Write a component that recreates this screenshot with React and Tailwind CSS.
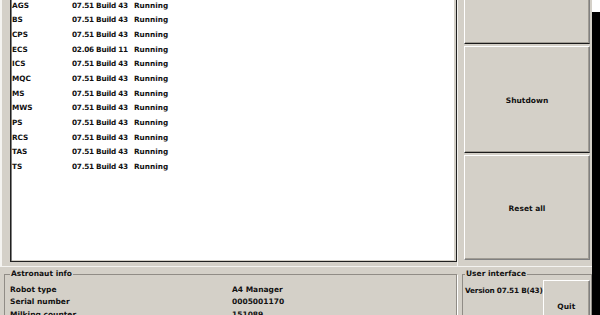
import React from "react";

const services = [
  ["AGS", "07.51 Build 43"],
  ["BS", "07.51 Build 43"],
  ["CPS", "07.51 Build 43"],
  ["ECS", "02.06 Build 11"],
  ["ICS", "07.51 Build 43"],
  ["MQC", "07.51 Build 43"],
  ["MS", "07.51 Build 43"],
  ["MWS", "07.51 Build 43"],
  ["PS", "07.51 Build 43"],
  ["RCS", "07.51 Build 43"],
  ["TAS", "07.51 Build 43"],
  ["TS", "07.51 Build 43"]
];

const robotInfo = [
  ["Robot type", "A4 Manager"],
  ["Serial number", "0005001170"],
  ["Milking counter", "151089"]
];

const PanelButton = ({ label, className }) => (
  <button
    className={`w-full flex items-center justify-center bg-[#d4d0c8] border-t border-l border-t-white border-l-white border-b border-r border-b-[#1a1a1a] border-r-[#808080] shadow-[inset_-1px_-1px_0_#a09c94] text-[7.5px] font-bold text-[#111] ${className}`}
  >
    {label}
  </button>
);

const App = () => {
  return (
    <div
      className="w-[600px] h-[315px] overflow-hidden flex bg-[#d4d0c8] text-[#111]"
      style={{ fontFamily: '"DejaVu Sans", sans-serif' }}
    >
      <div className="w-[592px] flex flex-col">
        {/* Top: service list + action buttons */}
        <div className="h-[266px] flex">
          <div className="w-[457px] h-full pl-[8px] border-l-2 border-l-[#f4f3f0]">
            <div className="h-[263px] bg-white border-l border-r border-b border-[#202020] shadow-[inset_1px_0_0_#808080,inset_-2px_-1px_0_#d4d0c8]">
              <div className="mt-[-1px] pl-[1px]">
                {services.map(([name, version]) => (
                  <div key={name} className="h-[14.65px] flex items-center text-[7.3px] font-bold whitespace-nowrap">
                    <span className="w-[60px]">{name}</span>
                    <span className="w-[62px] tracking-[-0.25px]">{version}</span>
                    <span>Running</span>
                  </div>
                ))}
              </div>
            </div>
          </div>
          <div className="w-[135px] h-full pl-[6px] pr-[2px] flex flex-col gap-[2px] border-l border-l-[#f4f3f0]">
            <PanelButton label="" className="h-[45px] mt-[-1px] border-t-0" />
            <PanelButton label="Shutdown" className="h-[107px] pt-[3px]" />
            <PanelButton label="Reset all" className="h-[105px] pt-[3px] border-b-[#808080]" />
          </div>
        </div>

        {/* Bottom: info group boxes */}
        <div className="h-[49px] flex border-t border-t-[#f4f3f0]">
          <fieldset className="w-[453px] ml-[4px] h-[60px] mt-[2px] border border-[#908c86] shadow-[1px_1px_0_#fff] pl-[5px]">
            <legend className="text-[7.5px] font-bold px-[1px] leading-[10px]">Astronaut info</legend>
            <div className="mt-[4px]">
              {robotInfo.map(([label, value]) => (
                <div key={label} className="h-[12.5px] flex items-center text-[7.5px] font-bold">
                  <span className="w-[222px]">{label}</span>
                  <span>{value}</span>
                </div>
              ))}
            </div>
          </fieldset>
          <fieldset className="w-[130px] ml-[5px] h-[60px] mt-[2px] border border-[#908c86] shadow-[1px_1px_0_#fff] pl-[2px] pr-[1px]">
            <legend className="text-[7.5px] font-bold px-[1px] leading-[10px]">User interface</legend>
            <div className="flex items-start">
              <span className="text-[7.3px] font-bold mt-[7px] whitespace-nowrap tracking-[-0.2px]">Version 07.51 B(43)</span>
              <PanelButton label="Quit" className="ml-auto w-[42px] h-[40px] mt-[1px] border-b-[#808080] pt-[14px]" />
            </div>
          </fieldset>
        </div>
      </div>

      {/* Right window edge */}
      <div className="w-[8px] flex flex-col">
        <div className="h-[12px] bg-white" />
        <div className="flex-1 bg-black" />
      </div>
    </div>
  );
};

export default App;
